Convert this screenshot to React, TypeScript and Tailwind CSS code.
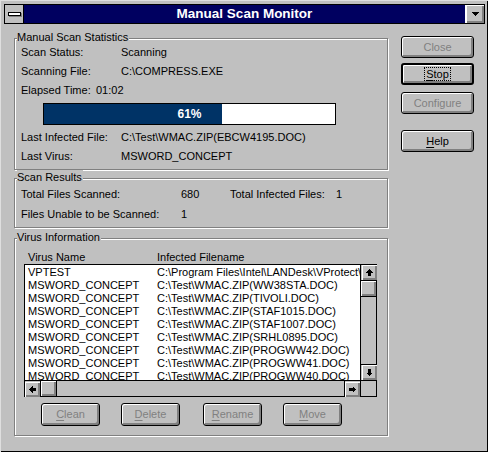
import React from 'react';

const bevel =
  'shadow-[inset_1px_1px_0_#fff,inset_-1px_-1px_0_#808080,inset_-2px_-2px_0_#808080]';

const rows: [string, string][] = [
  ['VPTEST', 'C:\\Program Files\\Intel\\LANDesk\\VProtect\\'],
  ['MSWORD_CONCEPT', 'C:\\Test\\WMAC.ZIP(WW38STA.DOC)'],
  ['MSWORD_CONCEPT', 'C:\\Test\\WMAC.ZIP(TIVOLI.DOC)'],
  ['MSWORD_CONCEPT', 'C:\\Test\\WMAC.ZIP(STAF1015.DOC)'],
  ['MSWORD_CONCEPT', 'C:\\Test\\WMAC.ZIP(STAF1007.DOC)'],
  ['MSWORD_CONCEPT', 'C:\\Test\\WMAC.ZIP(SRHL0895.DOC)'],
  ['MSWORD_CONCEPT', 'C:\\Test\\WMAC.ZIP(PROGWW42.DOC)'],
  ['MSWORD_CONCEPT', 'C:\\Test\\WMAC.ZIP(PROGWW41.DOC)'],
  ['MSWORD_CONCEPT', 'C:\\Test\\WMAC.ZIP(PROGWW40.DOC)'],
];

const Button: React.FC<{
  children: React.ReactNode;
  disabled?: boolean;
  primary?: boolean;
  className?: string;
}> = ({ children, disabled, primary, className = '' }) => (
  <div
    className={`flex items-center justify-center rounded-[3px] border-black bg-[#c0c0c0] text-[11px] ${bevel} ${
      primary ? 'border-2' : 'border'
    } ${disabled ? 'text-[#808080]' : 'text-black'} ${className}`}
  >
    {children}
  </div>
);

const GroupBox: React.FC<{ title: string; className?: string; children: React.ReactNode }> = ({
  title,
  className = '',
  children,
}) => (
  <div className={`relative border border-[#808080] shadow-[1px_1px_0_#fff,inset_1px_1px_0_#fff] ${className}`}>
    <span className="absolute -top-[9px] left-[2px] bg-[#c0c0c0] pr-[1px] text-[11px] leading-[14px]">
      {title}
    </span>
    {children}
  </div>
);

const Arrow: React.FC<{ rot?: string }> = ({ rot = '' }) => (
  <svg width="7" height="7" viewBox="0 0 7 7" className={rot} shapeRendering="crispEdges">
    <path d="M3.5 0 L7 3.5 H5 V7 H2 V3.5 H0 Z" fill="#000" />
  </svg>
);

const ScrollBtn: React.FC<{ rot?: string; className?: string }> = ({ rot, className = '' }) => (
  <div className={`flex h-[16px] w-[16px] items-center justify-center bg-[#c0c0c0] ${className}`}>
    <div className={`flex h-[15px] w-[15px] items-center justify-center ${bevel}`}>
      <Arrow rot={rot} />
    </div>
  </div>
);

const App: React.FC = () => {
  return (
    <div className="h-[452px] w-[488px] bg-[#c0c0c0] p-[3px] font-['Liberation_Sans',Arial,sans-serif] text-black shadow-[inset_1px_1px_0_#dfdfdf,inset_-1px_-1px_0_#000]">
      <div className="flex flex-col pl-[1px] pt-[1px]">
        {/* title bar */}
        <div className="flex h-[20px] border border-black">
          <div className="flex w-[19px] items-center justify-center border-r border-black bg-[#c0c0c0]">
            <div className="h-[4px] w-[13px] border border-black bg-white shadow-[1px_1px_0_#808080]" />
          </div>
          <div className="flex flex-1 items-center justify-center bg-[#000060] text-[13.5px] font-bold text-white">
            Manual Scan Monitor
          </div>
          <div className="flex w-[19px] items-center justify-center border-l border-white bg-[#c0c0c0]">
            <div className={`flex h-full w-full items-center justify-center ${bevel}`}>
              <svg width="7" height="4" viewBox="0 0 7 4" shapeRendering="crispEdges">
                <path d="M0 0 H7 L3.5 4 Z" fill="#000" />
              </svg>
            </div>
          </div>
        </div>

        {/* client area */}
        <div className="flex pl-[10px]">
          <div className="flex w-[374px] flex-col pt-[14px]">
            <GroupBox title="Manual Scan Statistics" className="pb-[3px] pl-[6px] pt-[4px]">
              <div className="flex h-[19px] items-center text-[11px]">
                <span className="w-[100px]">Scan Status:</span>
                <span>Scanning</span>
              </div>
              <div className="flex h-[19px] items-center text-[11px]">
                <span className="w-[100px]">Scanning File:</span>
                <span>C:\COMPRESS.EXE</span>
              </div>
              <div className="flex h-[19px] items-center text-[11px]">
                <span className="w-[75px]">Elapsed Time:</span>
                <span>01:02</span>
              </div>
              <div className="relative my-[3px] ml-[22px] h-[22px] w-[293px] border border-black bg-white">
                <div className="h-full w-[61%] bg-[#003366]" />
                <span className="absolute inset-0 flex items-center justify-center text-[12px] font-bold text-white">
                  61%
                </span>
              </div>
              <div className="flex h-[19px] items-center text-[11px]">
                <span className="w-[100px]">Last Infected File:</span>
                <span>C:\Test\WMAC.ZIP(EBCW4195.DOC)</span>
              </div>
              <div className="flex h-[19px] items-center text-[11px]">
                <span className="w-[100px]">Last Virus:</span>
                <span>MSWORD_CONCEPT</span>
              </div>
            </GroupBox>

            <GroupBox title="Scan Results" className="mt-[8px] pb-[3px] pl-[6px] pt-[5px]">
              <div className="flex h-[20px] items-center text-[11px]">
                <span className="w-[160px]">Total Files Scanned:</span>
                <span className="w-[49px]">680</span>
                <span className="w-[106px]">Total Infected Files:</span>
                <span>1</span>
              </div>
              <div className="flex h-[20px] items-center text-[11px]">
                <span className="w-[160px]">Files Unable to be Scanned:</span>
                <span>1</span>
              </div>
            </GroupBox>

            <GroupBox title="Virus Information" className="mt-[10px] pb-[9px] pl-[9px] pt-[11px]">
              <div className="flex h-[14px] items-center pl-[4px] text-[11px]">
                <span className="w-[129px]">Virus Name</span>
                <span>Infected Filename</span>
              </div>
              <div className="grid h-[133px] w-[353px] grid-cols-[335px_16px] grid-rows-[115px_16px] border border-black bg-white">
                <div className="overflow-hidden pt-[1px]">
                  {rows.map(([name, file], i) => (
                    <div key={i} className="flex h-[13px] items-center whitespace-nowrap text-[11px] leading-[13px]">
                      <span className="w-[132px] shrink-0 pl-[3px]">{name}</span>
                      <span>{file}</span>
                    </div>
                  ))}
                </div>
                <div className="flex flex-col border-l border-black bg-[#c0c0c0]">
                  <ScrollBtn className="w-[15px] border-b border-black" />
                  <div className={`h-[16px] w-[15px] border-b border-black ${bevel}`} />
                  <div className="flex-1" />
                  <ScrollBtn rot="rotate-180" className="w-[15px] border-t border-black" />
                </div>
                <div className="flex border-t border-black bg-[#c0c0c0]">
                  <ScrollBtn rot="-rotate-90" className="h-[15px] border-r border-black" />
                  <div className={`h-[15px] w-[16px] border-r border-black ${bevel}`} />
                  <div className="flex-1" />
                  <ScrollBtn rot="rotate-90" className="h-[15px] border-l border-black" />
                </div>
                <div className="border-l border-t border-black bg-[#c0c0c0]" />
              </div>
              <div className="mt-[6px] flex pl-[17px]">
                <Button disabled className="h-[23px] w-[59px]">
                  <u className="underline-offset-2">C</u>lean
                </Button>
                <Button disabled className="ml-[21px] h-[23px] w-[59px]">
                  <u className="underline-offset-2">D</u>elete
                </Button>
                <Button disabled className="ml-[23px] h-[23px] w-[59px]">
                  <u className="underline-offset-2">R</u>ename
                </Button>
                <Button disabled className="ml-[21px] h-[23px] w-[59px]">
                  <u className="underline-offset-2">M</u>ove
                </Button>
              </div>
            </GroupBox>
          </div>

          <div className="ml-[13px] flex flex-col pt-[12px]">
            <Button disabled className="h-[22px] w-[73px]">
              Close
            </Button>
            <Button primary className="mt-[5px] h-[22px] w-[73px]">
              <span className="border border-dotted border-black px-[1px] leading-[12px]">
                <u className="underline-offset-2">S</u>top
              </span>
            </Button>
            <Button disabled className="mt-[7px] h-[22px] w-[73px]">
              Configure
            </Button>
            <Button className="mt-[16px] h-[22px] w-[73px]">
              <u className="underline-offset-2">H</u>elp
            </Button>
          </div>
        </div>
      </div>
    </div>
  );
};

export default App;
